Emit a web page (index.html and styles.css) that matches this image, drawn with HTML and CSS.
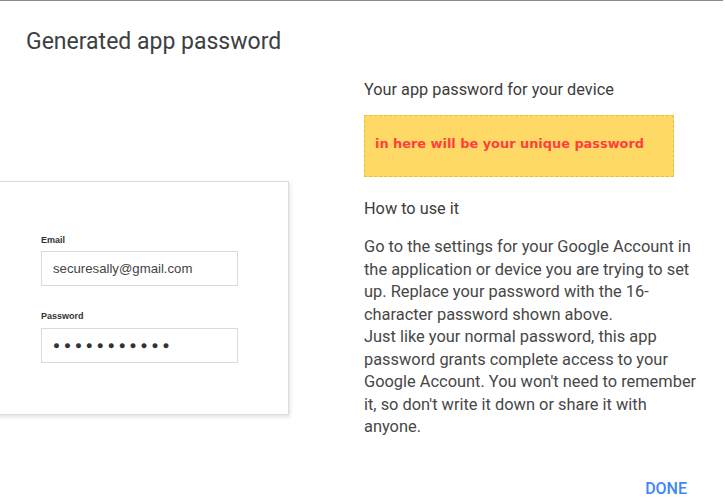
FILE: index.html
```html
<!DOCTYPE html>
<html>
<head>
<meta charset="utf-8">
<link rel="stylesheet" href="styles.css">
</head>
<body>
<div class="dialog">
  <div class="main">
    <div class="left">
      <h1 class="title">Generated app password</h1>
      <div class="card">
        <div class="label">Email</div>
        <div class="input">securesally@gmail.com</div>
        <div class="label label-2">Password</div>
        <div class="input dots">●●●●●●●●●●●</div>
      </div>
    </div>
    <div class="right">
      <h2 class="heading">Your app password for your device</h2>
      <div class="pwbox">in here will be your unique password</div>
      <h2 class="heading heading-2">How to use it</h2>
      <p class="text">Go to the settings for your Google Account in the application or device you are trying to set up. Replace your password with the 16-character password shown above.<br>Just like your normal password, this app password grants complete access to your Google Account. You won't need to remember it, so don't write it down or share it with anyone.</p>
    </div>
  </div>
  <div class="footer">
    <span class="done">DONE</span>
  </div>
</div>
</body>
</html>
```

FILE: styles.css
```css
html, body {
  margin: 0;
  padding: 0;
  background: #fff;
  overflow: hidden;
}
body {
  font-family: Roboto, "Liberation Sans", sans-serif;
}
.dialog {
  width: 723px;
  height: 501px;
  border-top: 1px solid #8c8c8c;
  display: flex;
  flex-direction: column;
}
.main {
  display: flex;
  flex: 1;
}
.left {
  width: 364px;
  flex: none;
}
.title {
  margin: 28px 0 0 26px;
  font-size: 23px;
  line-height: 26px;
  font-weight: 400;
  color: #3c4043;
}
.card {
  margin: 126px 0 0 -10px;
  width: 299px;
  height: 234px;
  box-sizing: border-box;
  border: 1px solid #dcdcdc;
  box-shadow: 1px 2px 4px rgba(0,0,0,0.12);
  padding: 52px 0 0 50px;
  font-family: "Liberation Sans", Arial, sans-serif;
}
.label {
  font-size: 9px;
  font-weight: 700;
  line-height: 12px;
  color: #333;
  margin-bottom: 5px;
}
.label-2 {
  margin-top: 24px;
  margin-bottom: 6px;
}
.input {
  width: 197px;
  height: 35px;
  box-sizing: border-box;
  border: 1px solid #dadada;
  padding: 0 0 0 11px;
  font-size: 13.2px;
  line-height: 33px;
  color: #444;
}
.dots {
  font-size: 11.5px;
  letter-spacing: 4px;
  color: #333;
}
.right {
  width: 355px;
  flex: none;
}
.heading {
  margin: 78px 0 0 0;
  font-size: 16.3px;
  line-height: 21px;
  font-weight: 400;
  color: #3c3c3c;
}
.heading-2 {
  margin-top: 21px;
}
.pwbox {
  margin-top: 15px;
  width: 310px;
  height: 62px;
  box-sizing: border-box;
  background: #ffd966;
  border: 1px dashed #e6bd45;
  padding-left: 10px;
  font-family: "DejaVu Sans", Verdana, sans-serif;
  font-weight: 700;
  font-size: 12.9px;
  line-height: 56px;
  color: #ff3f3f;
}
.text {
  margin: 17px 0 0 0;
  width: 340px;
  font-size: 16.4px;
  line-height: 22.5px;
  color: #474747;
}
.footer {
  display: flex;
  justify-content: flex-end;
  padding: 0 36px 3px 0;
}
.done {
  font-size: 16px;
  line-height: 20px;
  font-weight: 500;
  color: #4285f4;
}
```
